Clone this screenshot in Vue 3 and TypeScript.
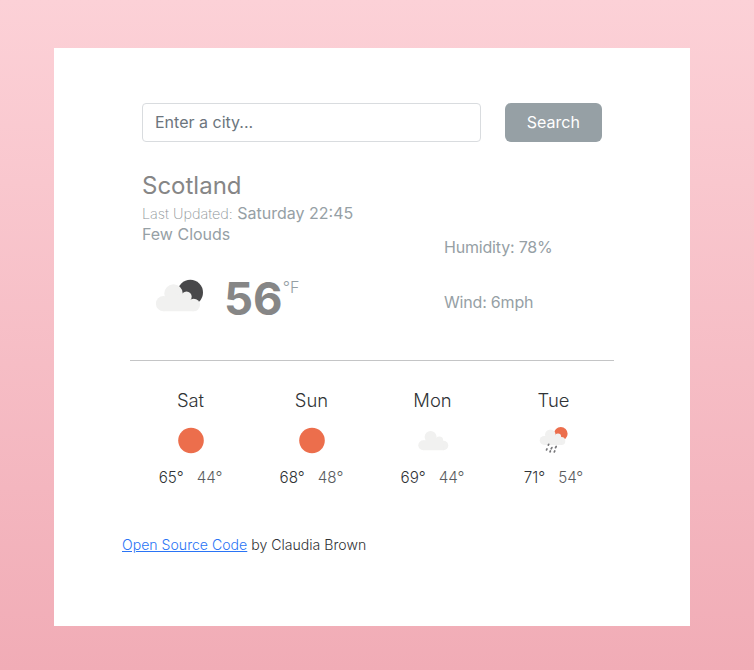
<script setup lang="ts">
import { ref } from 'vue'

type Icon = 'sun' | 'cloud' | 'rain'

interface ForecastDay {
  day: string
  icon: Icon
  high: number
  low: number
}

const city = ref('')

const forecast: ForecastDay[] = [
  { day: 'Sat', icon: 'sun', high: 65, low: 44 },
  { day: 'Sun', icon: 'sun', high: 68, low: 48 },
  { day: 'Mon', icon: 'cloud', high: 69, low: 44 },
  { day: 'Tue', icon: 'rain', high: 71, low: 54 },
]
</script>

<template>
  <div class="page">
    <main class="card">
      <form class="search" @submit.prevent>
        <input v-model="city" class="field" type="text" placeholder="Enter a city..." />
        <button class="submit" type="submit">Search</button>
      </form>

      <section class="current">
        <div class="summary">
          <h1 class="city">Scotland</h1>
          <div class="updated"><span class="label">Last Updated:</span> Saturday 22:45</div>
          <div class="description">Few Clouds</div>
          <div class="reading">
            <svg class="now-icon" viewBox="0 0 54 40">
              <circle cx="37.3" cy="15.5" r="12.7" fill="#48484a" />
              <g fill="#f1f1f0">
                <circle cx="20.5" cy="16.5" r="9.2" />
                <circle cx="33.5" cy="19.8" r="5.2" />
                <circle cx="10.5" cy="26.7" r="7.6" />
                <circle cx="40.7" cy="28" r="6.3" />
                <path d="M10.5 34.3V20h4l6-4 10 3 6 4 4.2 5v6.3z" />
              </g>
            </svg>
            <span class="temp">56</span><span class="unit">°F</span>
          </div>
        </div>
        <div class="details">
          <div>Humidity: 78%</div>
          <div>Wind: 6mph</div>
        </div>
      </section>

      <section class="forecast">
        <div v-for="item in forecast" :key="item.day" class="day">
          <div class="name">{{ item.day }}</div>
          <svg class="day-icon" viewBox="0 0 36 30">
            <circle v-if="item.icon === 'sun'" cx="18" cy="15.5" r="12.8" fill="#ec6e4c" />
            <g v-else-if="item.icon === 'cloud'" fill="#f1f1f0">
              <circle cx="15.6" cy="11.9" r="6" />
              <circle cx="24.3" cy="15.4" r="3.9" />
              <circle cx="8.3" cy="20.2" r="5" />
              <circle cx="28.6" cy="20.5" r="4.7" />
              <path d="M8.3 25.2V15.5h2l5-4 6 2 5 3 2.3 4v4.7z" />
            </g>
            <g v-else>
              <circle cx="24.8" cy="8.8" r="6.8" fill="#ec6e4c" />
              <g fill="#f1f1f0">
                <circle cx="14.3" cy="9.7" r="5.3" />
                <circle cx="22" cy="11.5" r="3.1" />
                <circle cx="8.2" cy="15.4" r="4.5" />
                <circle cx="25.4" cy="16" r="3.9" />
                <path d="M8.2 19.9V11h2l4-3 6 3 5 4v4.9z" />
              </g>
              <path
                d="M12.7 19.3l-.4.8M11 23.9l-.5 1M15.9 22.6l-.7 1.2M20.2 21.5l-.7 1.2M14.4 26l-.4.8M18.8 25.9l-.5 1"
                fill="none"
                stroke="#77777a"
                stroke-width="1.7"
                stroke-linecap="round"
              />
            </g>
          </svg>
          <div class="temps">
            <span class="high">{{ item.high }}°</span>
            <span class="low">{{ item.low }}°</span>
          </div>
        </div>
      </section>

      <footer class="credit"><a href="#">Open Source Code</a> by Claudia Brown</footer>
    </main>
  </div>
</template>

<style>
body {
  margin: 0;
}
</style>

<style scoped>
.page {
  box-sizing: border-box;
  height: 670px;
  padding: 48px 64px 44px 54px;
  background: linear-gradient(#fcd1d7, #f1acb6);
  font-family: Inter, 'Liberation Sans', sans-serif;
  font-size: 16px;
  color: #303336;
}

.card {
  box-sizing: border-box;
  height: 578px;
  padding: 55px 76px 0;
  background: #fff;
}

.search {
  display: flex;
  gap: 24px;
  height: 38px;
  padding: 0 12px;
}

.field,
.submit {
  box-sizing: border-box;
  height: 38.5px;
  font: inherit;
}

.field {
  width: 339px;
  padding: 0 12px;
  border: 1px solid #d9dcdf;
  border-radius: 4px;
  color: #212529;
}

.field::placeholder {
  color: #6c757d;
  opacity: 1;
}

.submit {
  width: 97.5px;
  padding: 0;
  border: 0;
  border-radius: 6px;
  background: #96a0a5;
  color: #fff;
}

.current {
  box-sizing: border-box;
  display: flex;
  height: 220px;
  padding: 30px 12px 0;
  border-bottom: 1px solid #c4c5c6;
  color: #96a0a5;
}

.summary {
  width: 302px;
}

.city {
  margin: 0;
  font-size: 24px;
  font-weight: 400;
  line-height: 30px;
  color: #868686;
}

.updated {
  line-height: 24px;
}

.label {
  font-size: 14.4px;
  font-weight: 200;
  color: #8d9498;
}

.description {
  line-height: 16px;
}

.reading {
  display: flex;
  height: 50px;
  padding-top: 32px;
}

.now-icon {
  width: 54px;
  height: 40px;
  margin: 3px 17px 0 11px;
}

.temp {
  font-size: 45.5px;
  font-weight: 700;
  line-height: 50px;
  color: #868686;
}

.unit {
  font-weight: 300;
  line-height: 26px;
}

.details {
  display: flex;
  flex-direction: column;
  gap: 31px;
  padding-top: 64px;
  line-height: 24px;
  letter-spacing: -0.19px;
}

.forecast {
  display: flex;
  padding-top: 26px;
  text-align: center;
}

.day {
  width: 121px;
}

.name {
  font-size: 18.4px;
  font-weight: 300;
  line-height: 26px;
}

.day-icon {
  display: block;
  width: 36px;
  height: 30px;
  margin: 12px auto 11px;
}

.temps {
  display: flex;
  justify-content: center;
  gap: 13px;
  font-size: 15.2px;
  line-height: 23px;
}

.low {
  opacity: 0.8;
}

.high,
.low {
  font-weight: 300;
}

.credit {
  margin: 45px 0 0 -8px;
  font-size: 14.1px;
  font-weight: 300;
  line-height: 22px;
}

.credit a {
  color: #2a74f5;
}
</style>
